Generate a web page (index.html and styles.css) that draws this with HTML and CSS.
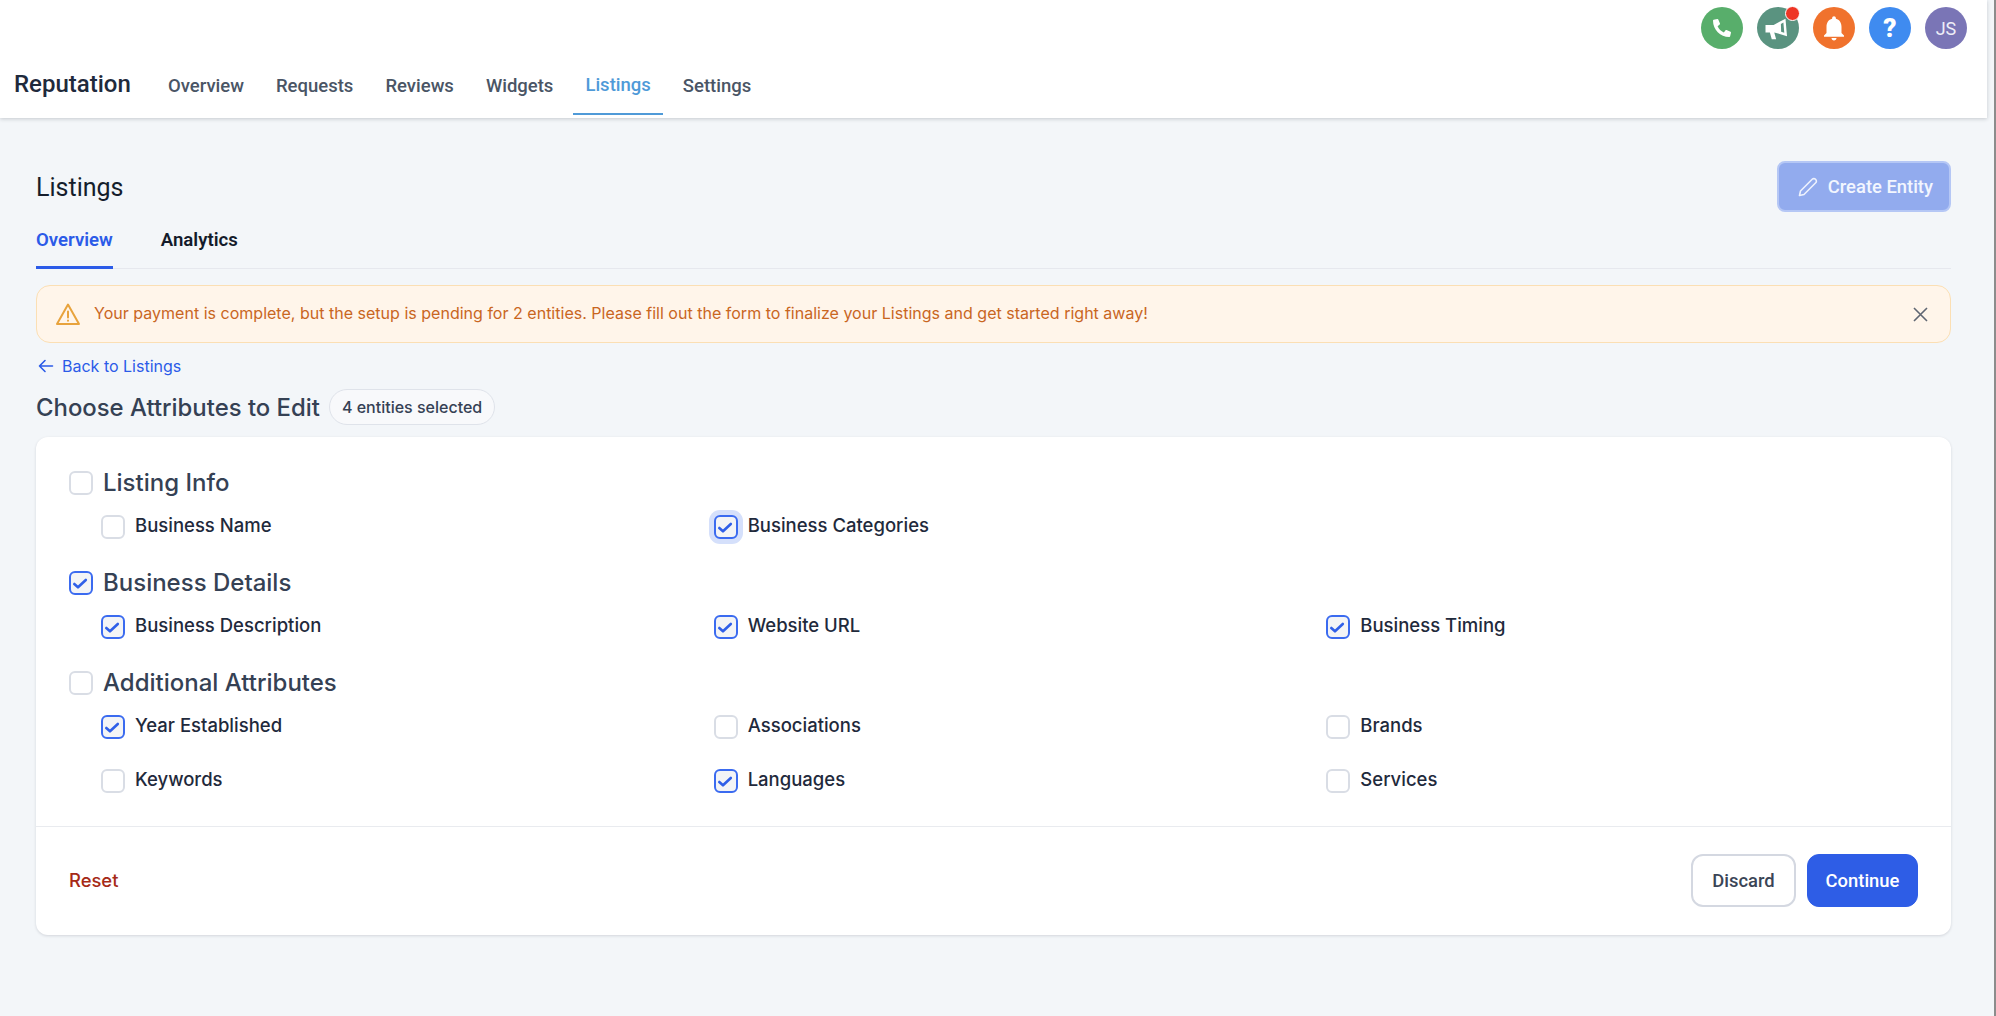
FILE: index.html
```html
<!DOCTYPE html>
<html lang="en">
<head>
    <meta charset="UTF-8">
    <title>Reputation - Listings</title>
    <link rel="stylesheet" href="styles.css">
</head>
<body>
    <svg class="defs" width="0" height="0">
        <symbol id="tick" viewBox="0 0 24 24">
            <path d="M5.300 13l3.700 3.300 7.800-7.300" fill="none" stroke="#2f5fe8" stroke-width="2.600" stroke-linecap="round" stroke-linejoin="round"/>
        </symbol>
    </svg>

    <div class="page">
        <header class="topbar">
            <div class="actions">
                <span class="circle green">
                    <svg width="18" height="18" viewBox="0 0 512 512"><path transform="translate(512 0) scale(-1 1)" fill="#fff" d="M493.4 24.6l-104-24c-11.3-2.6-22.9 3.3-27.5 13.9l-48 112c-4.2 9.8-1.4 21.3 6.9 28l60.6 49.6c-36 76.7-98.9 140.5-177.2 177.2l-49.6-60.6c-6.8-8.3-18.2-11.1-28-6.9l-112 48C3.9 366.5-2 378.1.6 389.4l24 104C27.1 504.2 36.7 512 48 512c256.1 0 464-207.5 464-464 0-11.2-7.7-20.9-18.6-23.4z"/></svg>
                </span>
                <span class="circle teal">
                    <svg width="30" height="30" viewBox="0 0 24 24"><path fill="#fff" d="M2 9.5h6.5L18 4.5l1.2 14L9 15.5l1.5 5.5H7l-1.500-5.500H2z"/><path fill="#5a9380" d="M16.300 7.500l.7 8.300-2.500-.8-.2-6.300z"/></svg>
                </span>
                <span class="circle orange">
                    <svg width="30" height="30" viewBox="0 0 24 24"><path fill="#fff" d="M12 22c1.100 0 2-.9 2-2h-4c0 1.100.89 2 2 2zm6-6v-5c0-3.070-1.640-5.640-4.500-6.320V4c0-.83-.67-1.500-1.500-1.500s-1.500.67-1.500 1.500v.68C7.630 5.360 6 7.920 6 11v5l-2 2v1h16v-1l-2-2z"/></svg>
                </span>
                <span class="circle blue">?</span>
                <span class="circle purple">JS</span>
            </div>
            <nav class="mainnav">
                <span class="brand">Reputation</span>
                <a class="navlink">Overview</a>
                <a class="navlink">Requests</a>
                <a class="navlink">Reviews</a>
                <a class="navlink">Widgets</a>
                <a class="navlink active">Listings</a>
                <a class="navlink">Settings</a>
            </nav>
        </header>

        <main class="content">
            <div class="titlerow">
                <h1>Listings</h1>
                <button class="btn-create">
                    <svg width="24" height="24" viewBox="0 0 24 24" fill="none" stroke="#eef2fd" stroke-width="1.600" stroke-linejoin="round"><path d="M3.500 20.500l1-4.500L16.200 4.300a2.300 2.300 0 013.300 0l.2.200a2.300 2.300 0 010 3.300L8 19.500z"/></svg>
                    Create Entity
                </button>
            </div>

            <div class="subtabs">
                <a class="subtab active">Overview</a>
                <a class="subtab">Analytics</a>
            </div>

            <div class="alert">
                <svg class="alert-icon" width="26" height="24" viewBox="0 0 26 24" fill="none" stroke="#e8a33d" stroke-width="2" stroke-linejoin="round" stroke-linecap="round"><path d="M13 2.500L24 22H2z"/><path d="M13 9.500v6M13 18.600v.2"/></svg>
                <span class="alert-text">Your payment is complete, but the setup is pending for 2 entities. Please fill out the form to finalize your Listings and get started right away!</span>
                <svg class="alert-close" width="15" height="15" viewBox="0 0 15 15" fill="none" stroke="#5f6672" stroke-width="1.600"><path d="M1 1l13 13M14 1L1 14"/></svg>
            </div>

            <a class="backlink">
                <svg width="18" height="18" viewBox="0 0 18 18" fill="none" stroke="#2b5be8" stroke-width="1.600" stroke-linecap="round" stroke-linejoin="round"><path d="M15.500 9h-13M8 3.500L2.500 9 8 14.500"/></svg>
                Back to Listings
            </a>

            <div class="headrow">
                <h2>Choose Attributes to Edit</h2>
                <span class="pill">4 entities selected</span>
            </div>

            <section class="card">
                <div class="card-body">
                    <div class="group">
                        <div class="group-head"><span class="box"></span>Listing Info</div>
                        <div class="grid">
                            <div class="item"><span class="box"></span>Business Name</div>
                            <div class="item"><span class="box on focus"><svg width="24" height="24"><use href="#tick"/></svg></span>Business Categories</div>
                        </div>
                    </div>
                    <div class="group">
                        <div class="group-head"><span class="box on"><svg width="24" height="24"><use href="#tick"/></svg></span>Business Details</div>
                        <div class="grid">
                            <div class="item"><span class="box on"><svg width="24" height="24"><use href="#tick"/></svg></span>Business Description</div>
                            <div class="item"><span class="box on"><svg width="24" height="24"><use href="#tick"/></svg></span>Website URL</div>
                            <div class="item"><span class="box on"><svg width="24" height="24"><use href="#tick"/></svg></span>Business Timing</div>
                        </div>
                    </div>
                    <div class="group">
                        <div class="group-head"><span class="box"></span>Additional Attributes</div>
                        <div class="grid">
                            <div class="item"><span class="box on"><svg width="24" height="24"><use href="#tick"/></svg></span>Year Established</div>
                            <div class="item"><span class="box"></span>Associations</div>
                            <div class="item"><span class="box"></span>Brands</div>
                            <div class="item"><span class="box"></span>Keywords</div>
                            <div class="item"><span class="box on"><svg width="24" height="24"><use href="#tick"/></svg></span>Languages</div>
                            <div class="item"><span class="box"></span>Services</div>
                        </div>
                    </div>
                </div>
                <div class="card-foot">
                    <a class="reset">Reset</a>
                    <div class="foot-btns">
                        <button class="btn-discard">Discard</button>
                        <button class="btn-continue">Continue</button>
                    </div>
                </div>
            </section>
        </main>
    </div>
    <div class="scrollstrip"></div>
</body>
</html>
```

FILE: styles.css
```css
html, body {
    height: 100%;
}
body {
    margin: 0;
    display: flex;
    height: 1016px;
    overflow: hidden;
    background-color: #f3f6f9;
    font-family: Inter, "Liberation Sans", sans-serif;
    color: #1f2a3c;
}
.defs {
    position: absolute;
}
.page {
    flex: 1;
    min-width: 0;
}
.scrollstrip {
    width: 2px;
    background-color: #8c8c8c;
}

/* top header */
.topbar {
    height: 118px;
    margin-right: 7px;
    background-color: #fff;
    box-shadow: 0 1px 4px rgba(16, 24, 40, 0.2);
}
.actions {
    display: flex;
    justify-content: flex-end;
    gap: 14px;
    height: 62px;
    padding: 7px 20px 0 0;
    box-sizing: border-box;
}
.circle {
    position: relative;
    display: flex;
    align-items: center;
    justify-content: center;
    width: 42px;
    height: 42px;
    border-radius: 50%;
    color: #fff;
    font-family: Roboto, sans-serif;
}
.green { background-color: #58ae6b; }
.teal { background-color: #5a9380; }
.teal::after {
    content: "";
    position: absolute;
    top: -1px;
    right: -1px;
    width: 13px;
    height: 13px;
    border-radius: 50%;
    background-color: #ee3524;
    border: 1px solid #fff;
}
.orange { background-color: #f0722d; }
.blue {
    background-color: #3f8bf0;
    font-size: 26px;
    font-weight: 900;
}
.purple {
    background-color: #7a75b6;
    font-size: 18px;
    color: #eeeef8;
}
.mainnav {
    display: flex;
    align-items: stretch;
    gap: 8px;
    height: 53px;
    padding-left: 14px;
}
.brand {
    width: 134px;
    line-height: 44px;
    font-family: Roboto, sans-serif;
    font-size: 24px;
    font-weight: 500;
    color: #1f2a3c;
}
.navlink {
    padding: 0 12px;
    line-height: 48px;
    font-family: Roboto, sans-serif;
    font-size: 18.500px;
    font-weight: 500;
    color: #4a5565;
}
.navlink.active {
    color: #4f9ad8;
    line-height: 46px;
    border-bottom: 2px solid #4f9ad8;
    height: 51px;
}

/* main */
.content {
    padding: 43px 43px 0 36px;
}
.titlerow {
    display: flex;
    align-items: center;
    justify-content: space-between;
    height: 51px;
}
h1 {
    margin: 2px 0 0;
    font-family: Roboto, sans-serif;
    font-size: 25px;
    font-weight: 400;
    color: #151d2c;
}
.btn-create {
    display: flex;
    align-items: center;
    gap: 8px;
    height: 51px;
    padding: 0 16px 0 17px;
    border: 2px solid #b5c7f5;
    border-radius: 8px;
    background-color: #92abee;
    color: #f3f6fe;
    font-family: Roboto, sans-serif;
    font-size: 18.400px;
    font-weight: 500;
}
.subtabs {
    display: flex;
    gap: 48px;
    height: 51px;
    margin-top: 5px;
    border-bottom: 1px solid #e6e8ee;
}
.subtab {
    height: 49px;
    line-height: 47px;
    font-family: Roboto, sans-serif;
    font-size: 18.600px;
    font-weight: 600;
    color: #141b2b;
}
.subtab.active {
    color: #2b5be8;
    border-bottom: 3px solid #2b5be8;
}
.alert {
    display: flex;
    align-items: center;
    height: 58px;
    margin-top: 16px;
    padding: 0 22px 0 18px;
    box-sizing: border-box;
    border: 1px solid #fbdfb4;
    border-radius: 14px;
    background-color: #fff5ea;
}
.alert-text {
    flex: 1;
    margin-left: 13px;
    margin-bottom: 2px;
    font-size: 16.040px;
    color: #c9661f;
}
.backlink {
    display: flex;
    align-items: center;
    gap: 7px;
    height: 20px;
    margin-top: 13px;
    padding-left: 1px;
    font-size: 16px;
    color: #2b5be8;
}
.headrow {
    display: flex;
    align-items: center;
    gap: 9px;
    height: 36px;
    margin-top: 13px;
}
h2 {
    margin: 0;
    font-size: 23.900px;
    font-weight: 450;
    color: #354154;
}
.pill {
    display: flex;
    align-items: center;
    height: 36px;
    padding: 0 12px;
    box-sizing: border-box;
    border: 1px solid #dfe3ea;
    border-radius: 18px;
    background-color: #f8f9fb;
    font-size: 16px;
    font-weight: 450;
    color: #354154;
}

/* attribute card */
.card {
    margin-top: 12px;
    border-radius: 12px;
    background-color: #fff;
    box-shadow: 0 1px 3px rgba(16, 24, 40, 0.14);
}
.card-body {
    padding: 34px 32px 33px 33px;
    display: flex;
    flex-direction: column;
    gap: 32px;
}
.group-head {
    display: flex;
    align-items: center;
    gap: 10px;
    height: 24px;
    line-height: 26px;
    font-size: 24px;
    font-weight: 450;
    color: #354154;
}
.grid {
    display: grid;
    grid-template-columns: repeat(3, 1fr);
    gap: 30px 20px;
    margin-top: 20px;
    margin-left: 32px;
}
.item {
    display: flex;
    align-items: flex-start;
    gap: 10px;
    line-height: 21px;
    font-size: 18.500px;
    font-weight: 450;
    color: #1f2a3c;
}
.box {
    display: block;
    flex: none;
    width: 24px;
    height: 24px;
    box-sizing: border-box;
    border: 2px solid #d9dde5;
    border-radius: 6px;
    background-color: #fff;
}
.box svg {
    display: block;
    margin: -2px;
}
.box.on {
    border-color: #3b6bf0;
    background-color: #f3f4f6;
}
.box.focus {
    box-shadow: 0 0 0 5px #d5e0fb;
}
.card-foot {
    display: flex;
    align-items: center;
    justify-content: space-between;
    padding: 27px 33px 28px 33px;
    border-top: 1px solid #e9ebef;
}
.reset {
    margin-bottom: 2px;
    font-size: 18.400px;
    font-weight: 450;
    color: #a62a17;
}
.foot-btns {
    display: flex;
    gap: 11px;
}
.foot-btns button {
    height: 53px;
    border-radius: 12px;
    font-family: Roboto, sans-serif;
    font-size: 18.400px;
    font-weight: 500;
}
.btn-discard {
    width: 105px;
    border: 2px solid #d4d8e1;
    background-color: #fff;
    color: #3b4556;
}
.btn-continue {
    width: 111px;
    border: 1px solid #2e5de6;
    background-color: #2e5de6;
    color: #fff;
}
```
